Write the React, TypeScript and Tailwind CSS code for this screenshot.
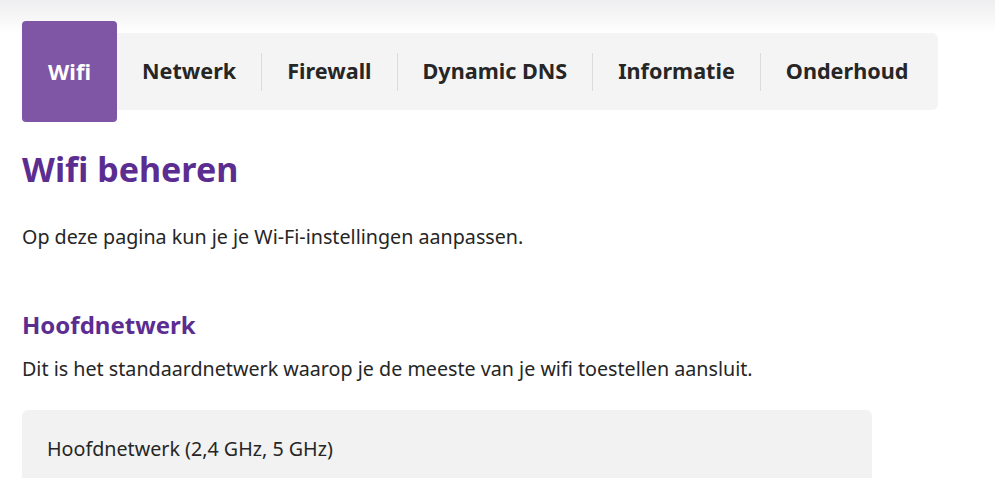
const tabs = ['Netwerk', 'Firewall', 'Dynamic DNS', 'Informatie', 'Onderhoud'];

export default function App() {
  return (
    <div className="min-h-[478px] bg-[linear-gradient(to_bottom,#eeeef0,#ffffff_34px)] font-['Noto_Sans',sans-serif] text-[#262626]">
      <div className="pl-[22px] pt-[21px]">
        {/* Tab bar */}
        <div className="flex items-center">
          <div className="z-10 flex h-[101px] w-[95px] items-center justify-center rounded-[4px] bg-[#7f55a6] text-[22px] font-bold text-white">
            Wifi
          </div>
          <div className="flex h-[77px] w-[821px] items-center rounded-r-[6px] bg-[#f4f4f4]">
            {tabs.map((t, i) => (
              <div key={t} className="flex items-center">
                {i > 0 && <div className="h-[38px] w-px bg-[#dcdcdc]" />}
                <div className="px-[25px] text-[21.6px] font-bold">{t}</div>
              </div>
            ))}
          </div>
        </div>

        <h1 className="mt-[24px] text-[34px] font-bold leading-[46px] text-[#5c2d91]">Wifi beheren</h1>
        <p className="mt-[31px] text-[19.7px] leading-[28px]">Op deze pagina kun je je Wi-Fi-instellingen aanpassen.</p>

        <h2 className="mt-[58px] text-[24px] font-bold leading-[32px] text-[#5c2d91]">Hoofdnetwerk</h2>
        <p className="mt-[14px] text-[19.7px] leading-[28px]">
          Dit is het standaardnetwerk waarop je de meeste van je wifi toestellen aansluit.
        </p>

        <div className="mt-[27px] w-[850px] rounded-t-[6px] bg-[#f2f2f2] px-[25px] pb-[20px] pt-[25px]">
          <div className="text-[19.7px] leading-[28px]">Hoofdnetwerk (2,4 GHz, 5 GHz)</div>
        </div>
      </div>
    </div>
  );
}
